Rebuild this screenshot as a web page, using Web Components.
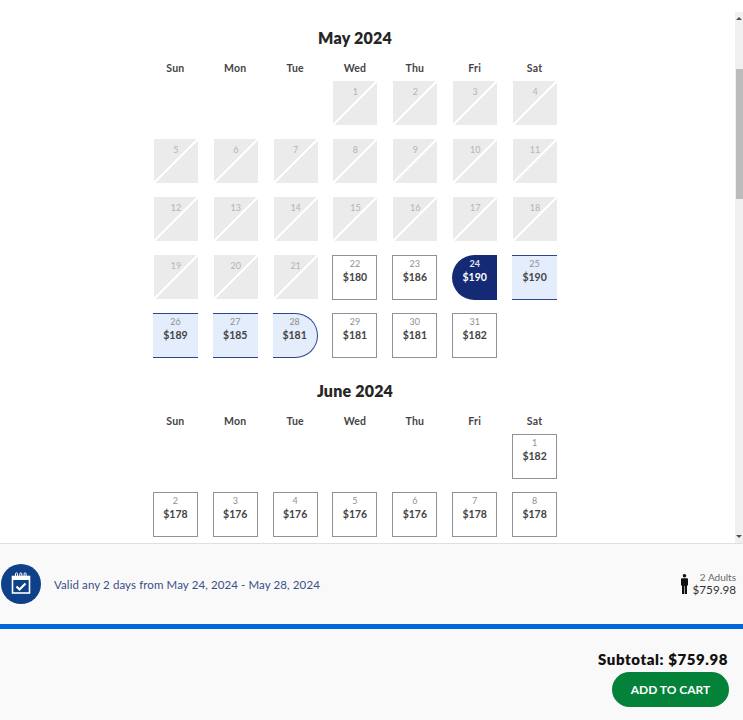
<!DOCTYPE html>
<html lang="en">
<head>
<meta charset="utf-8">
<title>Ticket calendar</title>
<style>
  html, body { margin: 0; height: 100%; overflow: hidden; background: #fff; }
  body { font-family: Lato, "Open Sans", sans-serif; color: #222; }
</style>
</head>
<body>
<ticket-page>
  <cal-scroller>
    <cal-month name="May 2024">
      <cal-day blank></cal-day><cal-day blank></cal-day><cal-day blank></cal-day>
      <cal-day n="1" off></cal-day><cal-day n="2" off></cal-day><cal-day n="3" off></cal-day><cal-day n="4" off></cal-day>
      <cal-day n="5" off></cal-day><cal-day n="6" off></cal-day><cal-day n="7" off></cal-day><cal-day n="8" off></cal-day><cal-day n="9" off></cal-day><cal-day n="10" off></cal-day><cal-day n="11" off></cal-day>
      <cal-day n="12" off></cal-day><cal-day n="13" off></cal-day><cal-day n="14" off></cal-day><cal-day n="15" off></cal-day><cal-day n="16" off></cal-day><cal-day n="17" off></cal-day><cal-day n="18" off></cal-day>
      <cal-day n="19" off></cal-day><cal-day n="20" off></cal-day><cal-day n="21" off></cal-day>
      <cal-day n="22" price="$180"></cal-day><cal-day n="23" price="$186"></cal-day>
      <cal-day n="24" price="$190" state="start"></cal-day><cal-day n="25" price="$190" state="mid"></cal-day>
      <cal-day n="26" price="$189" state="mid"></cal-day><cal-day n="27" price="$185" state="mid"></cal-day><cal-day n="28" price="$181" state="end"></cal-day>
      <cal-day n="29" price="$181"></cal-day><cal-day n="30" price="$181"></cal-day><cal-day n="31" price="$182"></cal-day>
    </cal-month>
    <cal-month name="June 2024">
      <cal-day blank></cal-day><cal-day blank></cal-day><cal-day blank></cal-day><cal-day blank></cal-day><cal-day blank></cal-day><cal-day blank></cal-day>
      <cal-day n="1" price="$182"></cal-day>
      <cal-day n="2" price="$178"></cal-day><cal-day n="3" price="$176"></cal-day><cal-day n="4" price="$176"></cal-day><cal-day n="5" price="$176"></cal-day><cal-day n="6" price="$176"></cal-day><cal-day n="7" price="$178"></cal-day><cal-day n="8" price="$178"></cal-day>
    </cal-month>
  </cal-scroller>
  <valid-bar>Valid any 2 days from May 24, 2024 - May 28, 2024</valid-bar>
  <cart-bar subtotal="$759.98"></cart-bar>
</ticket-page>

<script>
// Small helper so every element gets an open shadow root from a string
function shadow(el, html) {
  el.attachShadow({ mode: 'open' }).innerHTML = html
}

class TicketPage extends HTMLElement {
  constructor() {
    super()
    shadow(this, `
      <style>
        :host { display: flex; flex-direction: column; height: 720px; width: 743px; overflow: hidden; }
      </style>
      <slot></slot>
    `)
  }
}

class CalScroller extends HTMLElement {
  constructor() {
    super()
    shadow(this, `
      <style>
        :host { display: flex; height: 543px; flex: none; overflow: hidden; }
        .view { flex: 1; min-width: 0; height: 543px; overflow: hidden; padding: 28px 25px 0 0; box-sizing: border-box; }
        .bar { flex: none; width: 8px; margin-top: 12px; background: #f0f0f0; display: flex; flex-direction: column; align-items: center; }
        .up, .down { flex: none; width: 0; height: 0; border-left: 3px solid transparent; border-right: 3px solid transparent; }
        .up { margin-top: 5px; border-bottom: 3px solid #505050; }
        .thumb { flex: none; width: 7px; height: 130px; margin: 49px 0 0 1px; background: #bcbcbc; }
        .down { margin-top: auto; margin-bottom: 5px; border-top: 3px solid #505050; }
      </style>
      <div class="view"><slot></slot></div>
      <div class="bar"><div class="up"></div><div class="thumb"></div><div class="down"></div></div>
    `)
  }
}

class CalMonth extends HTMLElement {
  constructor() {
    super()
    const heads = ['Sun', 'Mon', 'Tue', 'Wed', 'Thu', 'Fri', 'Sat']
      .map(d => `<span>${d}</span>`).join('')
    shadow(this, `
      <style>
        :host { display: block; width: 419px; margin: 0 auto 23px; }
        h2 { margin: 0; height: 20px; text-align: center; font: 800 16px/20px Lato, sans-serif; color: #262626; letter-spacing: .2px; }
        .heads { display: grid; grid-template-columns: repeat(7, 1fr); margin-top: 13px; height: 14px; }
        .heads span { text-align: center; font: 700 10.5px/14px Lato, sans-serif; color: #444; letter-spacing: .2px; }
        .days { display: grid; grid-template-columns: repeat(7, 1fr); grid-auto-rows: 45px; row-gap: 13px; margin-top: 6px; }
      </style>
      <h2>${this.getAttribute('name')}</h2>
      <div class="heads">${heads}</div>
      <div class="days"><slot></slot></div>
    `)
  }
}

class CalDay extends HTMLElement {
  constructor() {
    super()
    const n = this.getAttribute('n') || ''
    const price = this.getAttribute('price')
    shadow(this, `
      <style>
        :host { display: block; justify-self: center; width: 45px; height: 45px; box-sizing: border-box; }
        :host([blank]) { visibility: hidden; }
        .box { box-sizing: border-box; width: 100%; height: 100%; display: flex; flex-direction: column; align-items: center;
               border: 1px solid #929292; background: #fff; padding-top: 2px; }
        .n { font: 400 9px/11px Lato, sans-serif; color: #8f8f8f; }
        .p { font: 700 10.5px/14px Lato, sans-serif; color: #444; margin-top: 1px; }
        :host([off]) .box { border: 0; width: 44px; height: 44px; margin-left: 1px; padding-top: 5px;
          background: linear-gradient(to bottom right, #ebebeb calc(50% - 1.3px), #fff calc(50% - 1.3px), #fff calc(50% + 1.3px), #ebebeb calc(50% + 1.3px)); }
        :host([off]) .n { color: #b4b4b4; }
        :host([state=start]) .box { border: 0; padding-top: 3px; background: #152a75; border-radius: 23px 0 0 23px; }
        :host([state=start]) .n { color: #e4e8f4; font-weight: 700; }
        :host([state=start]) .p { color: #fff; }
        :host([state=mid]) .box, :host([state=end]) .box { background: #e3edfb; border: 0; border-top: 1px solid #2b4590; border-bottom: 1px solid #2b4590; }
        :host([state=end]) .box { border-right: 1px solid #2b4590; border-radius: 0 23px 23px 0; }
      </style>
      <div class="box"><span class="n">${n}</span>${price ? `<span class="p">${price}</span>` : ''}</div>
    `)
  }
}

class ValidBar extends HTMLElement {
  constructor() {
    super()
    shadow(this, `
      <style>
        :host { display: flex; align-items: center; flex: none; height: 81px; box-sizing: border-box; background: #f9f9f9;
                border-top: 1px solid #e0e0e0; padding: 0 7px 0 1px; }
        svg.cal { flex: none; width: 40px; height: 40px; display: block; }
        .text { flex: 1; margin-left: 13px; padding-top: 1px; font: 400 11.5px/16px Lato, sans-serif; color: #3a4f86; letter-spacing: .1px; }
        .pax { flex: none; display: flex; align-items: center; gap: 5px; }
        svg.man { display: block; width: 7px; height: 20px; }
        .lines { text-align: right; }
        .ad { font: 400 10px/11px Lato, sans-serif; color: #666; }
        .amt { font: 400 11.7px/13px Lato, sans-serif; color: #333; }
      </style>
      <svg class="cal" viewBox="0 0 40 40">
        <circle cx="20" cy="20" r="20" fill="#0e4188"/>
        <rect x="11.500" y="12.500" width="17" height="16.500" fill="none" stroke="#fff" stroke-width="1.6"/>
        <rect x="11.500" y="12.500" width="17" height="3.500" fill="#fff"/>
        <path d="M14.500 13V9.800a1 1 0 0 1 2 0V13M18.800 13V9.800a1 1 0 0 1 2 0V13M23.100 13V9.800a1 1 0 0 1 2 0V13" fill="none" stroke="#fff" stroke-width="1"/>
        <path d="M15.500 22.500l3 3 6-6" fill="none" stroke="#fff" stroke-width="2.2"/>
      </svg>
      <div class="text"><slot></slot></div>
      <div class="pax">
        <svg class="man" viewBox="0 0 7 20">
          <circle cx="3.500" cy="1.800" r="1.800" fill="#111"/>
          <path d="M1 4.200h5a1 1 0 0 1 1 1v6.300H6V20H3.800v-8h-.6v8H1v-8.500H0V5.200a1 1 0 0 1 1-1z" fill="#111"/>
        </svg>
        <div class="lines"><div class="ad">2 Adults</div><div class="amt">$759.98</div></div>
      </div>
    `)
  }
}

class CartBar extends HTMLElement {
  constructor() {
    super()
    shadow(this, `
      <style>
        :host { display: flex; flex-direction: column; align-items: flex-end; flex: 1; background: #f9f9f9;
                border-top: 5px solid #0066dc; padding: 20px 14px 0 0; }
        .sub { font: 800 15px/20px Lato, sans-serif; color: #111; letter-spacing: .58px; margin-right: 1px; }
        button { margin-top: 3px; width: 117px; height: 35px; border: 0; border-radius: 18px; background: #04823a; color: #fff;
                 font: 700 12px/35px Lato, sans-serif; padding: 0; }
      </style>
      <div class="sub">Subtotal: ${this.getAttribute('subtotal')}</div>
      <button type="button">ADD TO CART</button>
    `)
  }
}

customElements.define('ticket-page', TicketPage)
customElements.define('cal-scroller', CalScroller)
customElements.define('cal-month', CalMonth)
customElements.define('cal-day', CalDay)
customElements.define('valid-bar', ValidBar)
customElements.define('cart-bar', CartBar)
</script>
</body>
</html>
